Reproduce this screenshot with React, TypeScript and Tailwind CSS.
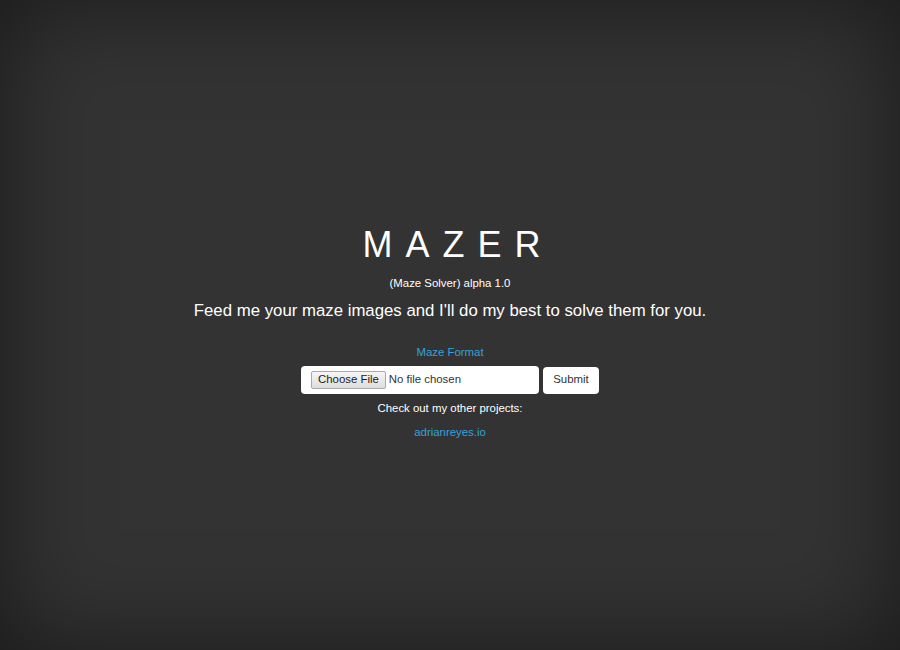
const App = () => {
  return (
    <div
      className="h-[650px] w-full bg-[#333333] shadow-[inset_0_0_100px_rgba(0,0,0,0.5)] text-white flex flex-col items-center"
      style={{ fontFamily: '"Liberation Sans", Arial, sans-serif' }}
    >
      <div className="pt-[221px] flex flex-col items-center w-full">
        {/* Title */}
        <h1 className="text-[36px] leading-[48px] tracking-[13px] pl-[16px] text-white font-normal">
          MAZER
        </h1>
        <p className="text-[11.4px] leading-[16px] mt-[6px]">(Maze Solver) alpha 1.0</p>
        <p className="text-[16.8px] leading-[24px] mt-[8px]">
          Feed me your maze images and I&apos;ll do my best to solve them for you.
        </p>

        <a href="#" className="text-[11.4px] leading-[16px] mt-[21px] text-[#36a2d8]">
          Maze Format
        </a>

        {/* Upload form */}
        <form className="flex items-center gap-[4px] mt-[6px]" onSubmit={(e) => e.preventDefault()}>
          <div className="w-[238px] h-[28px] bg-white rounded-[4px] flex items-center pl-[10px] gap-[3px]">
            <span className="h-[18px] px-[6px] flex items-center text-[11.4px] text-[#222] border border-[#a9a9a9] rounded-[2px] bg-gradient-to-b from-[#f6f6f6] to-[#dddddd]">
              Choose File
            </span>
            <span className="text-[11.4px] text-[#333]">No file chosen</span>
          </div>
          <button
            type="submit"
            className="w-[56px] h-[27px] bg-white rounded-[4px] text-[11.4px] text-[#333]"
          >
            Submit
          </button>
        </form>

        <p className="text-[11.4px] leading-[16px] mt-[6px]">Check out my other projects:</p>
        <a href="#" className="text-[11.4px] leading-[16px] mt-[8px] text-[#36a2d8]">
          adrianreyes.io
        </a>
      </div>
    </div>
  );
};

export default App;
